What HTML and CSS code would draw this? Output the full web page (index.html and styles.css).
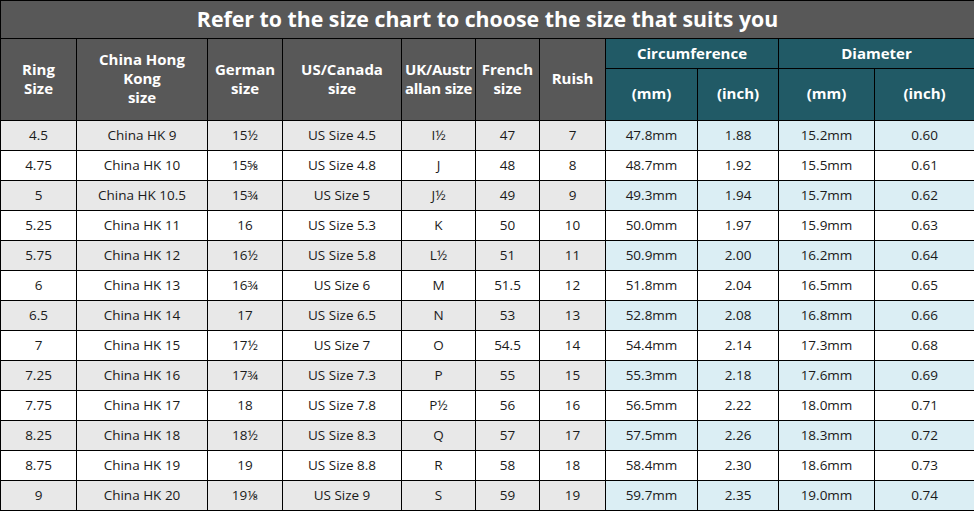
FILE: index.html
```html
<!DOCTYPE html>
<html>
<head>
<meta charset="utf-8">
<link rel="stylesheet" href="styles.css">
</head>
<body>
<table class="chart">
  <colgroup>
    <col class="c1"><col class="c2"><col class="c3"><col class="c4"><col class="c5"><col class="c6"><col class="c7"><col class="c8"><col class="c9"><col class="c10"><col class="c11">
  </colgroup>
  <thead>
    <tr class="title-row"><th colspan="11" class="title">Refer to the size chart to choose the size that suits you</th></tr>
    <tr class="head1">
      <th rowspan="2" class="gh">Ring<br>Size</th>
      <th rowspan="2" class="gh">China Hong<br>Kong<br>size</th>
      <th rowspan="2" class="gh">German<br>size</th>
      <th rowspan="2" class="gh">US/Canada<br>size</th>
      <th rowspan="2" class="gh tight">UK/Austr<br>allan size</th>
      <th rowspan="2" class="gh">French<br>size</th>
      <th rowspan="2" class="gh">Ruish</th>
      <th colspan="2" class="th top">Circumference</th>
      <th colspan="2" class="th top">Diameter</th>
    </tr>
    <tr class="head2">
      <th class="th sub">(mm)</th><th class="th sub">(inch)</th><th class="th sub">(mm)</th><th class="th sub">(inch)</th>
    </tr>
  </thead>
  <tbody>
    <tr class="odd"><td>4.5</td><td>China HK 9</td><td>15½</td><td>US Size 4.5</td><td>I½</td><td>47</td><td>7</td><td class="b">47.8mm</td><td class="b">1.88</td><td class="b">15.2mm</td><td class="b">0.60</td></tr>
    <tr class="even"><td>4.75</td><td>China HK 10</td><td>15⅝</td><td>US Size 4.8</td><td>J</td><td>48</td><td>8</td><td class="b">48.7mm</td><td class="b">1.92</td><td class="b">15.5mm</td><td class="b">0.61</td></tr>
    <tr class="odd"><td>5</td><td>China HK 10.5</td><td>15¾</td><td>US Size 5</td><td>J½</td><td>49</td><td>9</td><td class="b">49.3mm</td><td class="b">1.94</td><td class="b">15.7mm</td><td class="b">0.62</td></tr>
    <tr class="even"><td>5.25</td><td>China HK 11</td><td>16</td><td>US Size 5.3</td><td>K</td><td>50</td><td>10</td><td class="b">50.0mm</td><td class="b">1.97</td><td class="b">15.9mm</td><td class="b">0.63</td></tr>
    <tr class="odd"><td>5.75</td><td>China HK 12</td><td>16½</td><td>US Size 5.8</td><td>L½</td><td>51</td><td>11</td><td class="b">50.9mm</td><td class="b">2.00</td><td class="b">16.2mm</td><td class="b">0.64</td></tr>
    <tr class="even"><td>6</td><td>China HK 13</td><td>16¾</td><td>US Size 6</td><td>M</td><td>51.5</td><td>12</td><td class="b">51.8mm</td><td class="b">2.04</td><td class="b">16.5mm</td><td class="b">0.65</td></tr>
    <tr class="odd"><td>6.5</td><td>China HK 14</td><td>17</td><td>US Size 6.5</td><td>N</td><td>53</td><td>13</td><td class="b">52.8mm</td><td class="b">2.08</td><td class="b">16.8mm</td><td class="b">0.66</td></tr>
    <tr class="even"><td>7</td><td>China HK 15</td><td>17½</td><td>US Size 7</td><td>O</td><td>54.5</td><td>14</td><td class="b">54.4mm</td><td class="b">2.14</td><td class="b">17.3mm</td><td class="b">0.68</td></tr>
    <tr class="odd"><td>7.25</td><td>China HK 16</td><td>17¾</td><td>US Size 7.3</td><td>P</td><td>55</td><td>15</td><td class="b">55.3mm</td><td class="b">2.18</td><td class="b">17.6mm</td><td class="b">0.69</td></tr>
    <tr class="even"><td>7.75</td><td>China HK 17</td><td>18</td><td>US Size 7.8</td><td>P½</td><td>56</td><td>16</td><td class="b">56.5mm</td><td class="b">2.22</td><td class="b">18.0mm</td><td class="b">0.71</td></tr>
    <tr class="odd"><td>8.25</td><td>China HK 18</td><td>18½</td><td>US Size 8.3</td><td>Q</td><td>57</td><td>17</td><td class="b">57.5mm</td><td class="b">2.26</td><td class="b">18.3mm</td><td class="b">0.72</td></tr>
    <tr class="even"><td>8.75</td><td>China HK 19</td><td>19</td><td>US Size 8.8</td><td>R</td><td>58</td><td>18</td><td class="b">58.4mm</td><td class="b">2.30</td><td class="b">18.6mm</td><td class="b">0.73</td></tr>
    <tr class="odd"><td>9</td><td>China HK 20</td><td>19⅛</td><td>US Size 9</td><td>S</td><td>59</td><td>19</td><td class="b">59.7mm</td><td class="b">2.35</td><td class="b">19.0mm</td><td class="b">0.74</td></tr>
  </tbody>
</table>
</body>
</html>
```
FILE: styles.css
```css
html, body {
  margin: 0;
  padding: 0;
  background: #ffffff;
}
.chart {
  border-collapse: collapse;
  table-layout: fixed;
  width: 974px;
  font-family: "Open Sans", "Noto Sans", sans-serif;
  color: #1a1a1a;
}
.c1 { width: 76px; }
.c2 { width: 131px; }
.c3 { width: 75px; }
.c4 { width: 119px; }
.c5 { width: 74px; }
.c6 { width: 64px; }
.c7 { width: 66px; }
.c8 { width: 92px; }
.c9 { width: 81px; }
.c10 { width: 96px; }
.c11 { width: 100px; }
th, td {
  border: 1px solid #000;
  padding: 0;
  text-align: center;
  vertical-align: middle;
  overflow: hidden;
  white-space: nowrap;
}
.title-row { height: 38px; }
.title {
  background: #585858;
  color: #fff;
  font-size: 21.3px;
  font-weight: 700;
  line-height: 24px;
  padding-bottom: 1px;
}
.head1 { height: 30px; }
.head2 { height: 52px; }
.gh {
  background: #585858;
  color: #fff;
  font-size: 15px;
  font-weight: 700;
  line-height: 19px;
  padding-bottom: 2px;
}
.gh.tight { letter-spacing: -0.2px; }
.th {
  background: #215a66;
  color: #fff;
  font-size: 15px;
  font-weight: 700;
}
.th.top { padding-bottom: 2px; }
.th.sub { padding-bottom: 4px; }
tbody tr { height: 30px; }
tbody td {
  font-size: 13.5px;
  font-weight: 400;
  padding-bottom: 1px;
}
tr.odd td { background: #e8e8e8; }
tr.odd td.b { background: #dbeef4; }
tr.even td { background: #ffffff; }
```
